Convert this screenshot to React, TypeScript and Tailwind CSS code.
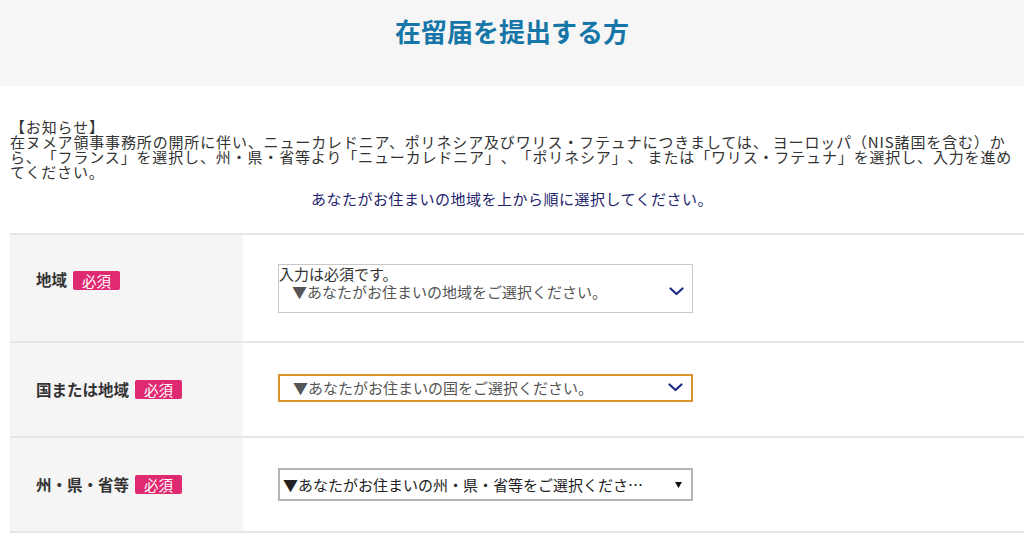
import React from "react";

const FONT = { fontFamily: '"Noto Sans CJK JP", "Noto Sans", sans-serif' };

function Chevron() {
  return (
    <svg width="15" height="9" viewBox="0 0 15 9" fill="none">
      <polyline points="1.5,1.5 7.5,7 13.5,1.5" stroke="#1f2a86" strokeWidth="2.2" strokeLinecap="round" strokeLinejoin="round" />
    </svg>
  );
}

function Badge() {
  return (
    <span className="ml-[6px] inline-flex h-[19px] items-center rounded-[2px] bg-[#df2a72] px-[9px] text-[14.5px] leading-[19px] font-normal text-white">
      必須
    </span>
  );
}

function Label({ text, shift }: { text: string; shift?: boolean }) {
  return (
    <div className={`flex w-[233px] shrink-0 items-center bg-[#f5f5f5] pl-[26px] ${shift ? "pb-[16px]" : ""}`}>
      <span className="text-[15.5px] font-bold text-[#333]">{text}</span>
      <Badge />
    </div>
  );
}

export default function App() {
  return (
    <div className="min-h-[543px] w-full bg-white text-[#333] [text-spacing-trim:space-all]" style={FONT}>
      <div className="flex h-[86px] justify-center bg-[#f6f6f6] pt-[14px]">
        <h1 className="text-[26px] leading-[34px] font-bold text-[#1776a8]">在留届を提出する方</h1>
      </div>

      <div className="mt-[33px] px-[10px] text-[15px] leading-[15px] tracking-[0.85px] text-[#333]">
        <p>【お知らせ】</p>
        <p>
          在ヌメア領事事務所の開所に伴い、ニューカレドニア、ポリネシア及びワリス・フテュナにつきましては、 ヨーロッパ（NIS諸国を含む）から、「フランス」を選択し、州・県・省等より「ニューカレドニア」、「ポリネシア」、 または「ワリス・フテュナ」を選択し、入力を進めてください。
        </p>
      </div>

      <p className="mt-[10px] text-center text-[15px] leading-[20px] tracking-[0.5px] text-[#23236b]">
        あなたがお住まいの地域を上から順に選択してください。
      </p>

      <div className="mt-[24px] ml-[10px] border-t-2 border-[#e6e6e6]">
        <div className="flex h-[108px] border-b-2 border-[#e6e6e6]">
          <Label text="地域" shift />
          <div className="flex flex-1 items-center pl-[35px]">
            <div className="w-[415px] border border-[#c9c9c9] bg-white">
              <div className="text-[15px] leading-[18px] text-[#333]">入力は必須です。</div>
              <div className="flex h-[29px] items-start justify-between pr-[8px] pl-[13px]">
                <span className="text-[15px] leading-[18px] text-[#555]">▼あなたがお住まいの地域をご選択ください。</span>
                <span className="mt-[4px]"><Chevron /></span>
              </div>
            </div>
          </div>
        </div>

        <div className="flex h-[95px] border-b-2 border-[#e6e6e6]">
          <Label text="国または地域" />
          <div className="flex flex-1 items-center pl-[35px] pb-[4px]">
            <div className="flex h-[28px] w-[415px] items-center justify-between border-2 border-[#d8952b] bg-white pr-[8px] pl-[13px]">
              <span className="text-[15px] leading-[18px] text-[#555]">▼あなたがお住まいの国をご選択ください。</span>
              <Chevron />
            </div>
          </div>
        </div>

        <div className="flex h-[95px] border-b-2 border-[#e6e6e6]">
          <Label text="州・県・省等" />
          <div className="flex flex-1 items-center pl-[35px]">
            <div className="flex h-[33px] w-[415px] items-center border-2 border-[#b5b5b5] bg-white pl-[3px]">
              <span className="w-[372px] truncate text-[15px] leading-[18px] text-[#222]">▼あなたがお住まいの州・県・省等をご選択ください。</span>
              <span className="ml-[20px] flex">
                <svg width="7" height="6" viewBox="0 0 7 6"><polygon points="0,0 7,0 3.5,6" fill="#111" /></svg>
              </span>
            </div>
          </div>
        </div>
      </div>
    </div>
  );
}
